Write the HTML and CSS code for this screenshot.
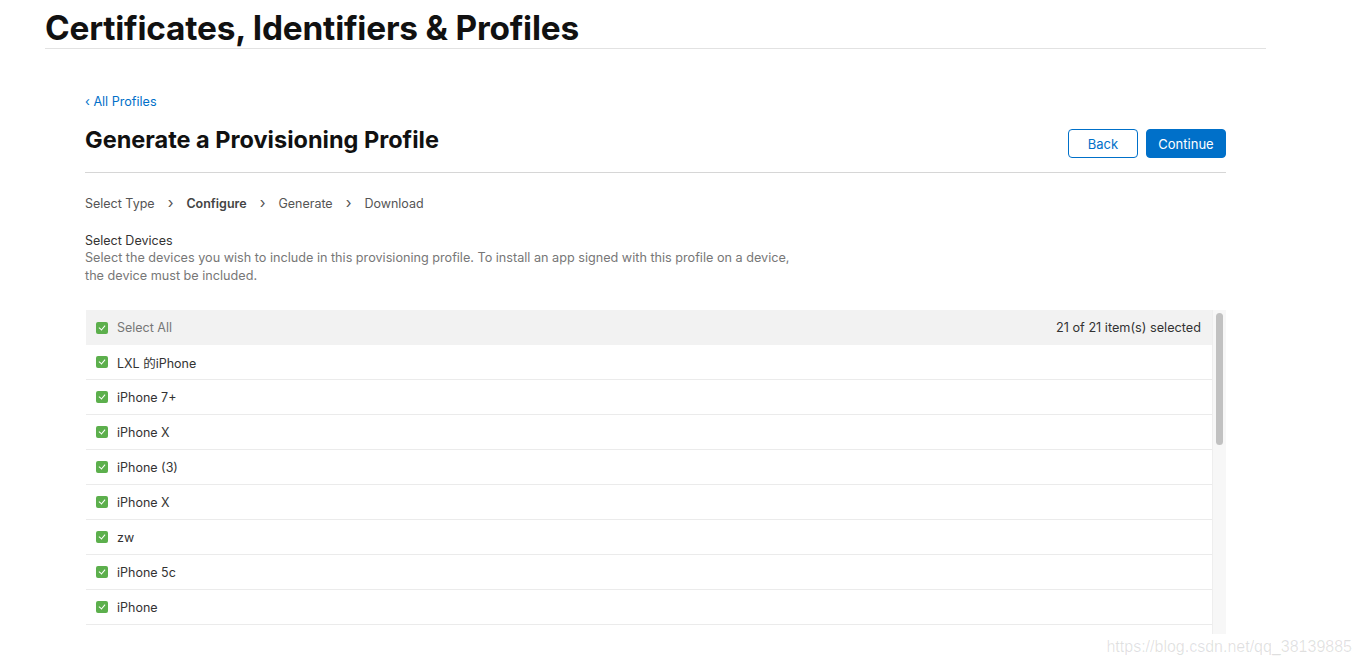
FILE: index.html
```html
<!DOCTYPE html>
<html>
<head>
<meta charset="utf-8">
<link rel="stylesheet" href="styles.css">
</head>
<body>
<div class="page">
  <header class="top">
    <h1 class="top-title">Certificates, Identifiers &amp; Profiles</h1>
  </header>
  <main class="content">
    <a class="back-link" href="#">&#8249; All Profiles</a>
    <div class="head-row">
      <h2 class="page-title">Generate a Provisioning Profile</h2>
      <div class="actions">
        <button class="btn btn-outline">Back</button>
        <button class="btn btn-primary">Continue</button>
      </div>
    </div>
    <nav class="steps">
      <span>Select Type</span><span class="chev">&#8250;</span>
      <span class="current">Configure</span><span class="chev">&#8250;</span>
      <span>Generate</span><span class="chev">&#8250;</span>
      <span>Download</span>
    </nav>
    <section class="intro">
      <div class="intro-title">Select Devices</div>
      <p class="intro-text">Select the devices you wish to include in this provisioning profile. To install an app signed with this profile on a device,<br>the device must be included.</p>
    </section>
    <div class="table-wrap">
      <div class="list">
        <div class="row row-head"><span class="cb"></span><span class="muted">Select All</span><span class="count">21 of 21 item(s) selected</span></div>
        <div class="row"><span class="cb"></span><span>LXL 的iPhone</span></div>
        <div class="row"><span class="cb"></span><span>iPhone 7+</span></div>
        <div class="row"><span class="cb"></span><span>iPhone X</span></div>
        <div class="row"><span class="cb"></span><span>iPhone (3)</span></div>
        <div class="row"><span class="cb"></span><span>iPhone X</span></div>
        <div class="row"><span class="cb"></span><span>zw</span></div>
        <div class="row"><span class="cb"></span><span>iPhone 5c</span></div>
        <div class="row"><span class="cb"></span><span>iPhone</span></div>
      </div>
      <div class="scrollbar"><div class="thumb"></div></div>
    </div>
  </main>
  <div class="watermark">https://blog.csdn.net/qq_38139885</div>
</div>
</body>
</html>
```
FILE: styles.css
```css
* { box-sizing: border-box; }
html, body { margin: 0; padding: 0; background: #fff; }
body { font-family: Inter, "Noto Sans CJK SC", sans-serif; color: #333; }
.page { position: relative; width: 1360px; height: 664px; overflow: hidden; }
.top { margin: 0 94px 0 45px; border-bottom: 1px solid #e2e2e2; padding-top: 8px; height: 49px; }
.top-title { margin: 0; font-size: 33.4px; font-weight: 700; line-height: 40px; color: #111; letter-spacing: -0.2px; }
.content { margin: 0 134px 0 85px; padding-top: 45px; }
.back-link { display: block; font-size: 12.6px; line-height: 16px; color: #0070c9; text-decoration: none; }
.head-row { display: flex; justify-content: space-between; align-items: flex-start; border-bottom: 1px solid #d6d6d6; height: 63px; padding-top: 16px; }
.page-title { margin: 0; font-size: 23.5px; font-weight: 700; color: #111; line-height: 28px; }
.actions { display: flex; gap: 8px; padding-top: 3px; }
.btn { height: 29px; border-radius: 4px; font-family: inherit; font-size: 13px; padding: 0 11px; cursor: pointer; }
.btn-outline { width: 70px; background: #fff; border: 1px solid #0070c9; color: #0070c9; }
.btn-primary { width: 80px; background: #0070c9; border: 1px solid #0070c9; color: #fff; }
.steps { display: flex; align-items: baseline; font-size: 12.5px; color: #555; padding-top: 21px; height: 59px; line-height: 17px; }
.steps .chev { margin: 0 13px; font-size: 15px; color: #555; }
.steps .current { font-weight: 600; color: #444; }
.intro { height: 78px; }
.intro-title { font-size: 12.5px; color: #333; line-height: 17px; }
.intro-text { margin: 0; font-size: 12.65px; color: #777; line-height: 18px; }
.table-wrap { display: flex; height: 324px; margin-left: 1px; overflow: hidden; }
.list { flex: 1; }
.row { display: flex; align-items: center; height: 35px; border-bottom: 1px solid #ebebeb; padding-left: 10px; font-size: 12.5px; color: #333; }
.row-head { background: #f2f2f2; border-bottom: none; }
.muted { color: #777; }
.count { margin-left: auto; margin-right: 11px; color: #333; font-size: 12.7px; }
.cb { width: 12px; height: 12px; border-radius: 2px; background: #5caf4c; margin-right: 9px; position: relative; flex: none; }
.cb::after { content: ""; position: absolute; left: 4px; top: 2px; width: 3px; height: 5px; border: solid #fff; border-width: 0 1.5px 1.5px 0; transform: rotate(40deg); }
.scrollbar { width: 14px; background: #f7f7f7; border-left: 1px solid #eee; padding: 3px 3px 0 3px; }
.thumb { width: 7px; height: 132px; background: #c1c1c1; border-radius: 4px; }
.watermark { position: absolute; right: 8px; bottom: 8px; font-family: "Liberation Sans", Arial, sans-serif; font-size: 16px; color: rgba(0,0,0,0.12); }
```
